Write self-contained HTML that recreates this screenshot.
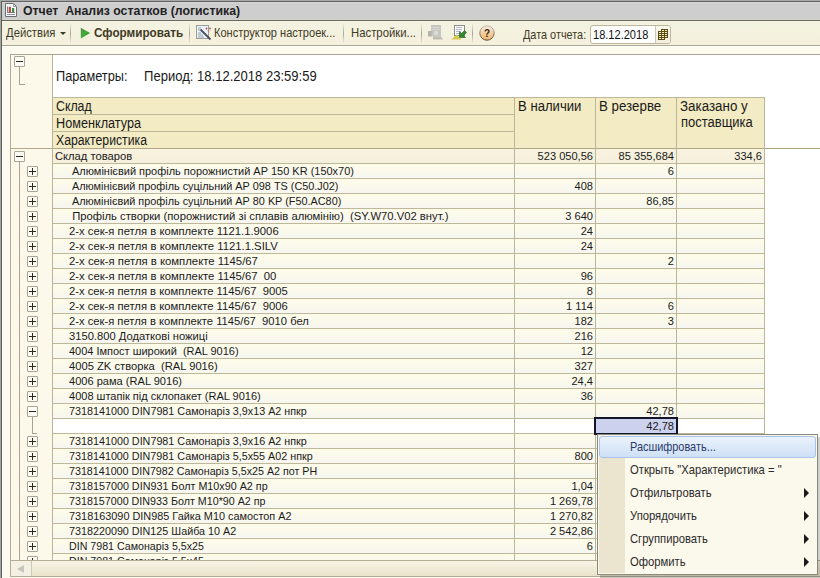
<!DOCTYPE html>
<html><head><meta charset="utf-8">
<style>
*{margin:0;padding:0;box-sizing:border-box}
html,body{width:820px;height:578px;overflow:hidden;background:#fcf9ee;font-family:"Liberation Sans",sans-serif;color:#1a1a1a}
.a{position:absolute}
.t{position:absolute;white-space:pre;line-height:15px}
.hl{position:absolute;height:1px;background:#bdb89a}
.vl{position:absolute;width:1px;background:#bab698}
.box{position:absolute;width:11px;height:11px;border:1px solid #aaa592;background:#fdfcf6;border-radius:1px}
.box i{position:absolute;left:1px;top:4px;width:7px;height:1px;background:#2a2a1a}
.box b{position:absolute;left:4px;top:1px;width:1px;height:7px;background:#2a2a1a}
.num{position:absolute;white-space:pre;line-height:15px;font-size:11.6px;text-align:right;transform:scaleX(0.955);transform-origin:100% 0}
.mi{position:absolute;left:630px;font-size:11px;line-height:15px;color:#2b2b2b;white-space:pre}
.arr{position:absolute;left:804px;width:0;height:0;border-left:5px solid #1a1a1a;border-top:5px solid transparent;border-bottom:5px solid transparent}
</style></head><body>

<div class="a" style="left:0;top:0;width:820px;height:1px;background:#a8a8a8"></div>
<div class="a" style="left:0;top:1px;width:820px;height:1px;background:#626262"></div>
<div class="a" style="left:0;top:0;width:1px;height:578px;background:#a2a5a0"></div>
<div class="a" style="left:1px;top:1px;width:1px;height:577px;background:#5c5f5a"></div>
<div class="a" style="left:2px;top:2px;width:818px;height:1px;background:#d6d6d6"></div>
<div class="a" style="left:2px;top:3px;width:818px;height:16px;background:#cecece"></div>
<div class="a" style="left:2px;top:19px;width:818px;height:1px;background:#d2d4d0"></div>
<div class="a" style="left:2px;top:20px;width:818px;height:1px;background:#65685a"></div>
<svg class="a" style="left:5px;top:3px" width="12" height="14" viewBox="0 0 12 14">
<path d="M0.5 0.5 L8.5 0.5 L11.5 3.5 L11.5 13.5 L0.5 13.5 Z" fill="#fbfdfd" stroke="#6c6c6c"/>
<path d="M8.5 0.5 L8.5 3.5 L11.5 3.5" fill="none" stroke="#9a9aa8"/>
<path d="M2.5 3.5 L2.5 9.5 L10 9.5" fill="none" stroke="#8a7a7a"/>
<rect x="3.7" y="3.7" width="2.2" height="5.8" fill="#b04848"/>
<rect x="7" y="5" width="2.2" height="4.5" fill="#3f8a3f"/>
<rect x="2" y="11" width="8" height="1" fill="#8a8ab8"/>
</svg>
<div class="t" style="left:22.5px;top:0.50px;line-height:20px;font-size:13px;font-weight:bold;color:#222;transform:scaleX(0.945);transform-origin:0 0">Отчет  Анализ остатков (логистика)</div>
<div class="a" style="left:2px;top:21px;width:818px;height:24px;background:linear-gradient(#fbfbe8 0px,#f3f2e0 1px,#f6f0de 24px)"></div>
<div class="a" style="left:2px;top:45px;width:818px;height:1px;background:#aaa898"></div>
<div class="t" style="left:5.5px;top:22.56px;line-height:20px;font-size:12.8px;font-weight:normal;color:#3f3a26;transform:scaleX(0.88);transform-origin:0 0">Действия</div>
<div class="a" style="left:60px;top:32px;width:0;height:0;border-left:3px solid transparent;border-right:3px solid transparent;border-top:3px solid #3f3a26"></div>
<div class="a" style="left:70px;top:23px;width:1px;height:21px;background:linear-gradient(rgba(160,155,140,0),#a8a498 50%,rgba(160,155,140,0))"></div>
<svg class="a" style="left:80px;top:27px" width="11" height="12" viewBox="0 0 11 12">
<defs><linearGradient id="pg" x1="0" y1="0" x2="1" y2="1"><stop offset="0" stop-color="#5a8a50"/><stop offset="0.5" stop-color="#3fb13a"/><stop offset="1" stop-color="#1f5a1f"/></linearGradient></defs>
<path d="M0.8 0.8 L10 6 L0.8 11.5 Z" fill="url(#pg)"/></svg>
<div class="t" style="left:94px;top:22.56px;line-height:20px;font-size:12.8px;font-weight:bold;color:#3f3a26;transform:scaleX(0.915);transform-origin:0 0">Сформировать</div>
<div class="a" style="left:189px;top:23px;width:1px;height:21px;background:linear-gradient(rgba(160,155,140,0),#a8a498 50%,rgba(160,155,140,0))"></div>
<svg class="a" style="left:195px;top:24px" width="17" height="17" viewBox="0 0 17 17">
<rect x="1.5" y="1.5" width="12" height="13" fill="#e9f5fb" stroke="#9d9d9a"/>
<path d="M3 4h3M3 6h2M3 9h3M3 11h5M3 13h6" stroke="#8a98a8" stroke-width="0.9"/>
<path d="M5.5 5.5 L15.5 15.5" stroke="#4c4c55" stroke-width="1.8"/>
<circle cx="11.5" cy="4.5" r="0.9" fill="#a05050"/><circle cx="15" cy="4.5" r="0.9" fill="#906a50"/><circle cx="13.5" cy="7" r="0.9" fill="#d07a7a"/>
</svg>
<div class="t" style="left:214px;top:22.56px;line-height:20px;font-size:12.8px;font-weight:normal;color:#3f3a26;transform:scaleX(0.863);transform-origin:0 0">Конструктор настроек...</div>
<div class="a" style="left:343px;top:23px;width:1px;height:21px;background:linear-gradient(rgba(160,155,140,0),#a8a498 50%,rgba(160,155,140,0))"></div>
<div class="t" style="left:351.3px;top:22.56px;line-height:20px;font-size:12.8px;font-weight:normal;color:#3f3a26;transform:scaleX(0.885);transform-origin:0 0">Настройки...</div>
<div class="a" style="left:421px;top:23px;width:1px;height:21px;background:linear-gradient(rgba(160,155,140,0),#a8a498 50%,rgba(160,155,140,0))"></div>
<svg class="a" style="left:427px;top:25px" width="17" height="15" viewBox="0 0 17 15">
<rect x="4" y="0" width="10" height="11.5" fill="#c6c6c0"/>
<rect x="5.5" y="2" width="7" height="1" fill="#dadad4"/><rect x="5.5" y="4" width="7" height="1" fill="#dadad4"/>
<circle cx="9" cy="8" r="2.2" fill="#dcdcd6"/>
<rect x="1" y="6" width="3.5" height="5.5" fill="#b4b4ac"/>
<path d="M6 11.5 L14 11.5 L16 14.5 L6 14.5Z" fill="#bdbdb4"/>
</svg>
<svg class="a" style="left:451px;top:25px" width="16" height="15" viewBox="0 0 16 15">
<rect x="3.5" y="0.5" width="10" height="10" fill="#fdfdfd" stroke="#8c8c8c"/>
<path d="M5 2.5h6M5 4.5h6M5 6.5h5M5 8.5h3" stroke="#9aaabb" stroke-width="0.8"/>
<path d="M0.5 14.5 L5.5 9.5 L10.5 14.5Z" fill="#d8c84a"/>
<path d="M8.5 6.5 L8.5 12.5 L14.5 12.5 L12.6 10.6 L15.5 7.5 L13.5 5.5 L10.5 8.5 Z" fill="#2f8a2f" stroke="#1d5a1d" stroke-width="0.6"/>
</svg>
<div class="a" style="left:472px;top:23px;width:1px;height:21px;background:linear-gradient(rgba(160,155,140,0),#a8a498 50%,rgba(160,155,140,0))"></div>
<svg class="a" style="left:479px;top:25px" width="16" height="16" viewBox="0 0 16 16">
<defs><linearGradient id="hg" x1="0" y1="0" x2="0" y2="1"><stop offset="0" stop-color="#f8efe6"/><stop offset="0.45" stop-color="#f3d2a8"/><stop offset="1" stop-color="#efb46e"/></linearGradient>
<linearGradient id="hs" x1="0" y1="0" x2="0" y2="1"><stop offset="0" stop-color="#c8b8a8"/><stop offset="1" stop-color="#5c4a2c"/></linearGradient></defs>
<circle cx="8" cy="8" r="7.2" fill="url(#hg)" stroke="url(#hs)" stroke-width="1"/>
<text x="8" y="11.8" text-anchor="middle" font-family="Liberation Sans" font-weight="bold" font-size="10" fill="#3c2a14">?</text>
</svg>
<div class="t" style="left:522.8px;top:24.56px;line-height:20px;font-size:12.8px;font-weight:normal;color:#3f3a26;transform:scaleX(0.85);transform-origin:0 0">Дата отчета:</div>
<div class="a" style="left:590px;top:25px;width:81px;height:19px;border:1px solid #bdb69a;border-radius:3px;background:#fff"></div>
<div class="a" style="left:655px;top:26px;width:15px;height:17px;background:linear-gradient(#fbf9ee,#f3efdc);border-left:1px solid #cdc8b4;border-radius:0 3px 3px 0"></div>
<div class="t" style="left:593px;top:24.50px;line-height:20px;font-size:13px;font-weight:normal;color:#111;transform:scaleX(0.85);transform-origin:0 0">18.12.2018</div>
<svg class="a" style="left:655px;top:28px" width="14" height="13" viewBox="0 0 14 13"><rect x="6" y="1" width="7" height="9" fill="#5c4a12"/><rect x="7" y="2" width="2" height="1" fill="#f8f0c8"/><rect x="10" y="2" width="2" height="1" fill="#f8f0c8"/><rect x="7" y="4" width="2" height="1" fill="#f8f0c8"/><rect x="10" y="4" width="2" height="1" fill="#f8f0c8"/><rect x="7" y="6" width="2" height="1" fill="#f8f0c8"/><rect x="10" y="6" width="2" height="1" fill="#f8f0c8"/><rect x="7" y="8" width="2" height="1" fill="#f8f0c8"/><rect x="10" y="8" width="2" height="1" fill="#f8f0c8"/><rect x="3" y="3" width="7" height="9" fill="#5c4a12"/><rect x="4" y="4" width="2" height="1" fill="#f8f0c8"/><rect x="7" y="4" width="2" height="1" fill="#f8f0c8"/><rect x="4" y="6" width="2" height="1" fill="#f8f0c8"/><rect x="7" y="6" width="2" height="1" fill="#f8f0c8"/><rect x="4" y="8" width="2" height="1" fill="#f8f0c8"/><rect x="7" y="8" width="2" height="1" fill="#f8f0c8"/><rect x="4" y="10" width="2" height="1" fill="#f8f0c8"/><rect x="7" y="10" width="2" height="1" fill="#f8f0c8"/></svg>
<div class="a" style="left:2px;top:46px;width:818px;height:532px;background:#fdfbf0"></div>
<div class="a" style="left:2px;top:46px;width:818px;height:1px;background:#fffff5"></div>
<div class="a" style="left:2px;top:46px;width:1px;height:532px;background:#fffffa"></div>
<div class="a" style="left:10px;top:54px;width:810px;height:1px;background:#a8a494"></div>
<div class="a" style="left:10px;top:54px;width:1px;height:524px;background:#b4aa98"></div>
<div class="a" style="left:11px;top:55px;width:41px;height:523px;background:#fdf9ea"></div>
<div class="a" style="left:53px;top:55px;width:767px;height:505px;background:#ffffff"></div>
<div class="a" style="left:52px;top:55px;width:1px;height:505px;background:#b9b39a"></div>
<div class="t" style="left:56px;top:66.15px;line-height:20px;font-size:14px;font-weight:normal;color:#1a1a1a;transform:scaleX(0.91);transform-origin:0 0">Параметры:</div>
<div class="t" style="left:143.5px;top:66.15px;line-height:20px;font-size:14px;font-weight:normal;color:#1a1a1a;transform:scaleX(0.932);transform-origin:0 0">Период: 18.12.2018 23:59:59</div>
<div class="box" style="left:14px;top:56px"><i></i></div>
<div class="a" style="left:19px;top:67px;width:1px;height:18px;background:#a8a390"></div>
<div class="a" style="left:19px;top:84px;width:6px;height:1px;background:#a8a390"></div>
<div class="a" style="left:53px;top:97px;width:711px;height:51px;background:#f3ebc4"></div>
<div class="hl" style="left:52px;top:97px;width:713px"></div>
<div class="hl" style="left:52px;top:114px;width:462px"></div>
<div class="hl" style="left:52px;top:131px;width:462px"></div>
<div class="vl" style="left:514px;top:97px;height:463px"></div>
<div class="vl" style="left:595px;top:97px;height:463px"></div>
<div class="vl" style="left:676px;top:97px;height:463px"></div>
<div class="vl" style="left:764px;top:97px;height:463px"></div>
<div class="t" style="left:55.5px;top:96.15px;line-height:20px;font-size:14px;font-weight:normal;color:#1a1a1a;transform:scaleX(0.88);transform-origin:0 0">Склад</div>
<div class="t" style="left:55.5px;top:113.15px;line-height:20px;font-size:14px;font-weight:normal;color:#1a1a1a;transform:scaleX(0.905);transform-origin:0 0">Номенклатура</div>
<div class="t" style="left:55.5px;top:130.15px;line-height:20px;font-size:14px;font-weight:normal;color:#1a1a1a;transform:scaleX(0.874);transform-origin:0 0">Характеристика</div>
<div class="t" style="left:518px;top:96.15px;line-height:20px;font-size:14px;font-weight:normal;color:#1a1a1a;transform:scaleX(0.937);transform-origin:0 0">В наличии</div>
<div class="t" style="left:599px;top:96.15px;line-height:20px;font-size:14px;font-weight:normal;color:#1a1a1a;transform:scaleX(0.952);transform-origin:0 0">В резерве</div>
<div class="t" style="left:679.5px;top:96.15px;line-height:20px;font-size:14px;font-weight:normal;color:#1a1a1a;transform:scaleX(0.955);transform-origin:0 0">Заказано у</div>
<div class="t" style="left:680.5px;top:112.15px;line-height:20px;font-size:14px;font-weight:normal;color:#1a1a1a;transform:scaleX(0.927);transform-origin:0 0">поставщика</div>
<div class="a" style="left:10px;top:148px;width:810px;height:1px;background:#b0a888"></div>
<div class="a" style="left:53px;top:149px;width:711px;height:14px;background:linear-gradient(#f8f2de,#f5f0dc)"></div>
<div class="t" style="left:55px;top:148.3px;font-size:11.6px;transform:scaleX(0.9646);transform-origin:0 0">Склад товаров</div>
<div class="box" style="left:14px;top:151px"><i></i></div>
<div class="num" style="left:515px;top:148.3px;width:78px">523 050,56</div>
<div class="num" style="left:596px;top:148.3px;width:78px">85 355,684</div>
<div class="num" style="left:684px;top:148.3px;width:78px">334,6</div>
<div class="a" style="left:53px;top:164px;width:711px;height:14px;background:linear-gradient(#fefce8,#f7f6f0)"></div>
<div class="hl" style="left:52px;top:163px;width:712px"></div>
<div class="t" style="left:69px;top:163.3px;font-size:11.6px;transform:scaleX(0.9463);transform-origin:0 0"> Алюмінієвий профіль порожнистий АР 150 KR (150x70)</div>
<div class="box" style="left:27px;top:166px"><i></i><b></b></div>
<div class="num" style="left:596px;top:163.3px;width:78px">6</div>
<div class="a" style="left:53px;top:179px;width:711px;height:14px;background:linear-gradient(#fefce8,#f7f6f0)"></div>
<div class="hl" style="left:52px;top:178px;width:712px"></div>
<div class="t" style="left:69px;top:178.3px;font-size:11.6px;transform:scaleX(0.9364);transform-origin:0 0"> Алюмінієвий профіль суцільний АР 098 TS (С50.J02)</div>
<div class="box" style="left:27px;top:181px"><i></i><b></b></div>
<div class="num" style="left:515px;top:178.3px;width:78px">408</div>
<div class="a" style="left:53px;top:194px;width:711px;height:14px;background:linear-gradient(#fefce8,#f7f6f0)"></div>
<div class="hl" style="left:52px;top:193px;width:712px"></div>
<div class="t" style="left:69px;top:193.3px;font-size:11.6px;transform:scaleX(0.9365);transform-origin:0 0"> Алюмінієвий профіль суцільний АР 80 KP (F50.AC80)</div>
<div class="box" style="left:27px;top:196px"><i></i><b></b></div>
<div class="num" style="left:596px;top:193.3px;width:78px">86,85</div>
<div class="a" style="left:53px;top:209px;width:711px;height:14px;background:linear-gradient(#fefce8,#f7f6f0)"></div>
<div class="hl" style="left:52px;top:208px;width:712px"></div>
<div class="t" style="left:69px;top:208.3px;font-size:11.6px;transform:scaleX(0.9706);transform-origin:0 0"> Профіль створки (порожнистий зі сплавів алюмінію)  (SY.W70.V02 внут.)</div>
<div class="box" style="left:27px;top:211px"><i></i><b></b></div>
<div class="num" style="left:515px;top:208.3px;width:78px">3 640</div>
<div class="a" style="left:53px;top:224px;width:711px;height:14px;background:linear-gradient(#fefce8,#f7f6f0)"></div>
<div class="hl" style="left:52px;top:223px;width:712px"></div>
<div class="t" style="left:69px;top:223.3px;font-size:11.6px;transform:scaleX(0.9714);transform-origin:0 0">2-х сек-я петля в комплекте 1121.1.9006</div>
<div class="box" style="left:27px;top:226px"><i></i><b></b></div>
<div class="num" style="left:515px;top:223.3px;width:78px">24</div>
<div class="a" style="left:53px;top:239px;width:711px;height:14px;background:linear-gradient(#fefce8,#f7f6f0)"></div>
<div class="hl" style="left:52px;top:238px;width:712px"></div>
<div class="t" style="left:69px;top:238.3px;font-size:11.6px;transform:scaleX(0.9741);transform-origin:0 0">2-х сек-я петля в комплекте 1121.1.SILV</div>
<div class="box" style="left:27px;top:241px"><i></i><b></b></div>
<div class="num" style="left:515px;top:238.3px;width:78px">24</div>
<div class="a" style="left:53px;top:254px;width:711px;height:14px;background:linear-gradient(#fefce8,#f7f6f0)"></div>
<div class="hl" style="left:52px;top:253px;width:712px"></div>
<div class="t" style="left:69px;top:253.3px;font-size:11.6px;transform:scaleX(0.9774);transform-origin:0 0">2-х сек-я петля в комплекте 1145/67</div>
<div class="box" style="left:27px;top:256px"><i></i><b></b></div>
<div class="num" style="left:596px;top:253.3px;width:78px">2</div>
<div class="a" style="left:53px;top:269px;width:711px;height:14px;background:linear-gradient(#fefce8,#f7f6f0)"></div>
<div class="hl" style="left:52px;top:268px;width:712px"></div>
<div class="t" style="left:69px;top:268.3px;font-size:11.6px;transform:scaleX(0.9752);transform-origin:0 0">2-х сек-я петля в комплекте 1145/67  00</div>
<div class="box" style="left:27px;top:271px"><i></i><b></b></div>
<div class="num" style="left:515px;top:268.3px;width:78px">96</div>
<div class="a" style="left:53px;top:284px;width:711px;height:14px;background:linear-gradient(#fefce8,#f7f6f0)"></div>
<div class="hl" style="left:52px;top:283px;width:712px"></div>
<div class="t" style="left:69px;top:283.3px;font-size:11.6px;transform:scaleX(0.9696);transform-origin:0 0">2-х сек-я петля в комплекте 1145/67  9005</div>
<div class="box" style="left:27px;top:286px"><i></i><b></b></div>
<div class="num" style="left:515px;top:283.3px;width:78px">8</div>
<div class="a" style="left:53px;top:299px;width:711px;height:14px;background:linear-gradient(#fefce8,#f7f6f0)"></div>
<div class="hl" style="left:52px;top:298px;width:712px"></div>
<div class="t" style="left:69px;top:298.3px;font-size:11.6px;transform:scaleX(0.9696);transform-origin:0 0">2-х сек-я петля в комплекте 1145/67  9006</div>
<div class="box" style="left:27px;top:301px"><i></i><b></b></div>
<div class="num" style="left:515px;top:298.3px;width:78px">1 114</div>
<div class="num" style="left:596px;top:298.3px;width:78px">6</div>
<div class="a" style="left:53px;top:314px;width:711px;height:14px;background:linear-gradient(#fefce8,#f7f6f0)"></div>
<div class="hl" style="left:52px;top:313px;width:712px"></div>
<div class="t" style="left:69px;top:313.3px;font-size:11.6px;transform:scaleX(0.9669);transform-origin:0 0">2-х сек-я петля в комплекте 1145/67  9010 бел</div>
<div class="box" style="left:27px;top:316px"><i></i><b></b></div>
<div class="num" style="left:515px;top:313.3px;width:78px">182</div>
<div class="num" style="left:596px;top:313.3px;width:78px">3</div>
<div class="a" style="left:53px;top:329px;width:711px;height:14px;background:linear-gradient(#fefce8,#f7f6f0)"></div>
<div class="hl" style="left:52px;top:328px;width:712px"></div>
<div class="t" style="left:69px;top:328.3px;font-size:11.6px;transform:scaleX(0.9644);transform-origin:0 0">3150.800 Додаткові ножиці</div>
<div class="box" style="left:27px;top:331px"><i></i><b></b></div>
<div class="num" style="left:515px;top:328.3px;width:78px">216</div>
<div class="a" style="left:53px;top:344px;width:711px;height:14px;background:linear-gradient(#fefce8,#f7f6f0)"></div>
<div class="hl" style="left:52px;top:343px;width:712px"></div>
<div class="t" style="left:69px;top:343.3px;font-size:11.6px;transform:scaleX(0.9460);transform-origin:0 0">4004 Імпост широкий  (RAL 9016)</div>
<div class="box" style="left:27px;top:346px"><i></i><b></b></div>
<div class="num" style="left:515px;top:343.3px;width:78px">12</div>
<div class="a" style="left:53px;top:359px;width:711px;height:14px;background:linear-gradient(#fefce8,#f7f6f0)"></div>
<div class="hl" style="left:52px;top:358px;width:712px"></div>
<div class="t" style="left:69px;top:358.3px;font-size:11.6px;transform:scaleX(0.9652);transform-origin:0 0">4005 ZK створка  (RAL 9016)</div>
<div class="box" style="left:27px;top:361px"><i></i><b></b></div>
<div class="num" style="left:515px;top:358.3px;width:78px">327</div>
<div class="a" style="left:53px;top:374px;width:711px;height:14px;background:linear-gradient(#fefce8,#f7f6f0)"></div>
<div class="hl" style="left:52px;top:373px;width:712px"></div>
<div class="t" style="left:69px;top:373.3px;font-size:11.6px;transform:scaleX(0.9543);transform-origin:0 0">4006 рама (RAL 9016)</div>
<div class="box" style="left:27px;top:376px"><i></i><b></b></div>
<div class="num" style="left:515px;top:373.3px;width:78px">24,4</div>
<div class="a" style="left:53px;top:389px;width:711px;height:14px;background:linear-gradient(#fefce8,#f7f6f0)"></div>
<div class="hl" style="left:52px;top:388px;width:712px"></div>
<div class="t" style="left:69px;top:388.3px;font-size:11.6px;transform:scaleX(0.9507);transform-origin:0 0">4008 штапік під склопакет (RAL 9016)</div>
<div class="box" style="left:27px;top:391px"><i></i><b></b></div>
<div class="num" style="left:515px;top:388.3px;width:78px">36</div>
<div class="a" style="left:53px;top:404px;width:711px;height:14px;background:linear-gradient(#fefce8,#f7f6f0)"></div>
<div class="hl" style="left:52px;top:403px;width:712px"></div>
<div class="t" style="left:69px;top:403.3px;font-size:11.6px;transform:scaleX(0.9284);transform-origin:0 0">7318141000 DIN7981 Самонаріз 3,9x13 А2 нпкр</div>
<div class="box" style="left:27px;top:406px"><i></i></div>
<div class="num" style="left:596px;top:403.3px;width:78px">42,78</div>
<div class="a" style="left:53px;top:419px;width:711px;height:14px;background:#ffffff"></div>
<div class="hl" style="left:52px;top:418px;width:712px"></div>
<div class="num" style="left:596px;top:418.3px;width:78px">42,78</div>
<div class="a" style="left:53px;top:434px;width:711px;height:14px;background:linear-gradient(#fefce8,#f7f6f0)"></div>
<div class="hl" style="left:52px;top:433px;width:712px"></div>
<div class="t" style="left:69px;top:433.3px;font-size:11.6px;transform:scaleX(0.9284);transform-origin:0 0">7318141000 DIN7981 Самонаріз 3,9x16 А2 нпкр</div>
<div class="box" style="left:27px;top:436px"><i></i><b></b></div>
<div class="a" style="left:53px;top:449px;width:711px;height:14px;background:linear-gradient(#fefce8,#f7f6f0)"></div>
<div class="hl" style="left:52px;top:448px;width:712px"></div>
<div class="t" style="left:69px;top:448.3px;font-size:11.6px;transform:scaleX(0.9281);transform-origin:0 0">7318141000 DIN7981 Самонаріз 5,5x55 А02 нпкр</div>
<div class="box" style="left:27px;top:451px"><i></i><b></b></div>
<div class="num" style="left:515px;top:448.3px;width:78px">800</div>
<div class="a" style="left:53px;top:464px;width:711px;height:14px;background:linear-gradient(#fefce8,#f7f6f0)"></div>
<div class="hl" style="left:52px;top:463px;width:712px"></div>
<div class="t" style="left:69px;top:463.3px;font-size:11.6px;transform:scaleX(0.9226);transform-origin:0 0">7318141000 DIN7982 Самонаріз 5,5x25 А2 пот PH</div>
<div class="box" style="left:27px;top:466px"><i></i><b></b></div>
<div class="a" style="left:53px;top:479px;width:711px;height:14px;background:linear-gradient(#fefce8,#f7f6f0)"></div>
<div class="hl" style="left:52px;top:478px;width:712px"></div>
<div class="t" style="left:69px;top:478.3px;font-size:11.6px;transform:scaleX(0.9286);transform-origin:0 0">7318157000 DIN931 Болт М10x90 А2 пр</div>
<div class="box" style="left:27px;top:481px"><i></i><b></b></div>
<div class="num" style="left:515px;top:478.3px;width:78px">1,04</div>
<div class="a" style="left:53px;top:494px;width:711px;height:14px;background:linear-gradient(#fefce8,#f7f6f0)"></div>
<div class="hl" style="left:52px;top:493px;width:712px"></div>
<div class="t" style="left:69px;top:493.3px;font-size:11.6px;transform:scaleX(0.9243);transform-origin:0 0">7318157000 DIN933 Болт М10*90 А2 пр</div>
<div class="box" style="left:27px;top:496px"><i></i><b></b></div>
<div class="num" style="left:515px;top:493.3px;width:78px">1 269,78</div>
<div class="a" style="left:53px;top:509px;width:711px;height:14px;background:linear-gradient(#fefce8,#f7f6f0)"></div>
<div class="hl" style="left:52px;top:508px;width:712px"></div>
<div class="t" style="left:69px;top:508.3px;font-size:11.6px;transform:scaleX(0.9378);transform-origin:0 0">7318163090 DIN985 Гайка М10 самостоп А2</div>
<div class="box" style="left:27px;top:511px"><i></i><b></b></div>
<div class="num" style="left:515px;top:508.3px;width:78px">1 270,82</div>
<div class="a" style="left:53px;top:524px;width:711px;height:14px;background:linear-gradient(#fefce8,#f7f6f0)"></div>
<div class="hl" style="left:52px;top:523px;width:712px"></div>
<div class="t" style="left:69px;top:523.3px;font-size:11.6px;transform:scaleX(0.9282);transform-origin:0 0">7318220090 DIN125 Шайба 10 А2</div>
<div class="box" style="left:27px;top:526px"><i></i><b></b></div>
<div class="num" style="left:515px;top:523.3px;width:78px">2 542,86</div>
<div class="a" style="left:53px;top:539px;width:711px;height:14px;background:linear-gradient(#fefce8,#f7f6f0)"></div>
<div class="hl" style="left:52px;top:538px;width:712px"></div>
<div class="t" style="left:69px;top:538.3px;font-size:11.6px;transform:scaleX(0.9189);transform-origin:0 0">DIN 7981 Самонаріз 5,5x25</div>
<div class="box" style="left:27px;top:541px"><i></i><b></b></div>
<div class="num" style="left:515px;top:538.3px;width:78px">6</div>
<div class="a" style="left:53px;top:554px;width:711px;height:14px;background:linear-gradient(#fefce8,#f7f6f0)"></div>
<div class="hl" style="left:52px;top:553px;width:712px"></div>
<div class="t" style="left:69px;top:553.3px;font-size:11.6px;transform:scaleX(0.9189);transform-origin:0 0">DIN 7981 Самонаріз 5,5x45</div>
<div class="box" style="left:27px;top:556px"><i></i><b></b></div>
<div class="vl" style="left:514px;top:148px;height:412px"></div>
<div class="vl" style="left:595px;top:148px;height:412px"></div>
<div class="vl" style="left:676px;top:148px;height:412px"></div>
<div class="vl" style="left:764px;top:148px;height:412px"></div>
<div class="vl" style="left:52px;top:148px;height:412px;background:#b9b39a"></div>
<div class="a" style="left:19px;top:162px;width:1px;height:398px;background:#a8a390"></div>
<div class="a" style="left:32px;top:417px;width:1px;height:17px;background:#a8a390"></div>
<div class="a" style="left:32px;top:433px;width:5px;height:1px;background:#a8a390"></div>
<div class="a" style="left:594px;top:417px;width:84px;height:18px;border:2px solid #15152a;background:#ccd2ee"></div>
<div class="num" style="left:596px;top:418.3px;width:78px">42,78</div>
<div class="a" style="left:10px;top:560px;width:810px;height:17px;background:linear-gradient(#f8f4e4,#e9e3ca);border-top:1px solid #b4ae96;border-bottom:1px solid #b4ae96;border-left:1px solid #b4ae96"></div>
<div class="a" style="left:11px;top:561px;width:21px;height:15px;background:#f4f1e4;border-right:1px solid #cfc9b2"></div>
<div class="a" style="left:17px;top:565px;width:0;height:0;border-right:7px solid #c8c6bc;border-top:4px solid transparent;border-bottom:4px solid transparent"></div>
<div class="a" style="left:2px;top:577px;width:818px;height:1px;background:#fbf8ee"></div>
<div class="a" style="left:600px;top:437px;width:220px;height:141px;background:rgba(0,0,0,0.18)"></div>
<div class="a" style="left:597px;top:434px;width:221px;height:141px;background:#fbf8ec;border:1px solid #8a887c"></div>
<div class="a" style="left:599px;top:458px;width:26px;height:115px;background:#ebe5cf"></div>
<div class="a" style="left:599px;top:436px;width:217px;height:22px;border:1px solid #a9c3e8;border-radius:3px;background:linear-gradient(#eaf2fc,#cfe0f6)"></div>
<div class="t" style="left:630px;top:436.50px;line-height:20px;font-size:13px;font-weight:normal;color:#2b3a6a;transform:scaleX(0.84);transform-origin:0 0">Расшифровать...</div>
<div class="t" style="left:630px;top:459.50px;line-height:20px;font-size:13px;font-weight:normal;color:#2b2b2b;transform:scaleX(0.865);transform-origin:0 0">Открыть "Характеристика = "</div>
<div class="t" style="left:630px;top:482.50px;line-height:20px;font-size:13px;font-weight:normal;color:#2b2b2b;transform:scaleX(0.865);transform-origin:0 0">Отфильтровать</div>
<div class="arr" style="top:488px"></div>
<div class="t" style="left:630px;top:505.50px;line-height:20px;font-size:13px;font-weight:normal;color:#2b2b2b;transform:scaleX(0.865);transform-origin:0 0">Упорядочить</div>
<div class="arr" style="top:511px"></div>
<div class="t" style="left:630px;top:528.50px;line-height:20px;font-size:13px;font-weight:normal;color:#2b2b2b;transform:scaleX(0.865);transform-origin:0 0">Сгруппировать</div>
<div class="arr" style="top:534px"></div>
<div class="t" style="left:630px;top:551.50px;line-height:20px;font-size:13px;font-weight:normal;color:#2b2b2b;transform:scaleX(0.865);transform-origin:0 0">Оформить</div>
<div class="arr" style="top:557px"></div>
</body></html>
